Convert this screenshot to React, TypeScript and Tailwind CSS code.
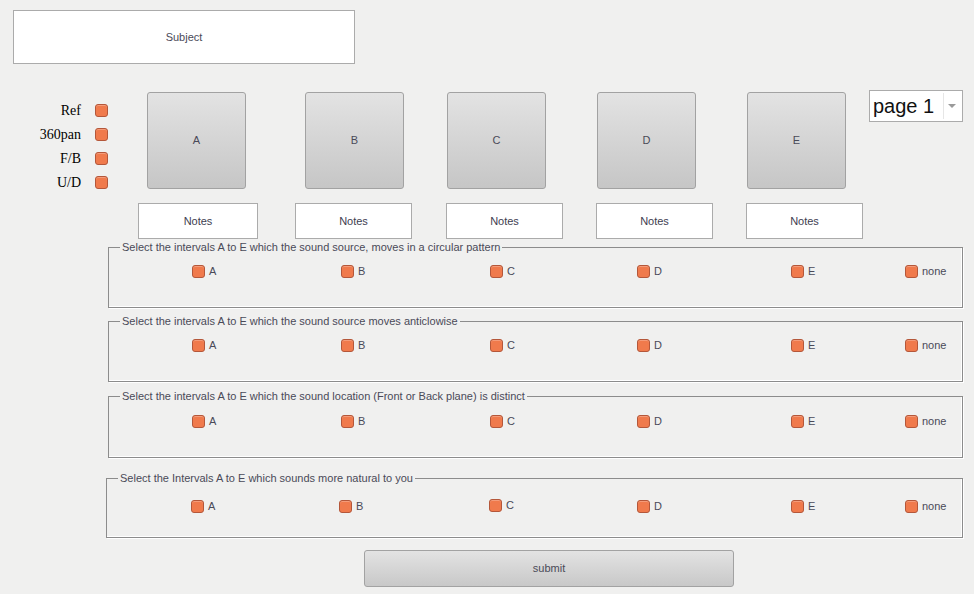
const OPTS = ["A", "B", "C", "D", "E", "none"];

const Check = () => (
  <span className="inline-block h-[13px] w-[13px] shrink-0 rounded-[3px] border border-[#b4573a] bg-[#f07a4c] shadow-[inset_0_1px_0_rgba(255,255,255,0.25)]" />
);

const Choice = ({ label, w, dy = 0 }: { label: string; w?: number; dy?: number }) => (
  <div className="flex shrink-0 items-center gap-[4px]" style={{ width: w, marginTop: dy }}>
    <Check />
    <span className="text-[11px] leading-[13px] text-[#4a4a58]">{label}</span>
  </div>
);

interface Group {
  title: string;
  mt: string;
  h: string;
  pt: string;
  left: string;
  titleLeft: string;
  lead: number;
  widths: number[];
  dys?: number[];
}

const groups: Group[] = [
  {
    title: "Select the intervals A to E which the sound source, moves in a circular pattern",
    mt: "mt-[8px]",
    h: "h-[61px]",
    pt: "pt-[17px]",
    left: "ml-[108px] w-[855px]",
    titleLeft: "left-[11px]",
    lead: 83,
    widths: [149, 149, 147, 154, 114, 50],
  },
  {
    title: "Select the intervals A to E which the sound source moves anticlowise",
    mt: "mt-[13px]",
    h: "h-[61px]",
    pt: "pt-[17px]",
    left: "ml-[108px] w-[855px]",
    titleLeft: "left-[11px]",
    lead: 83,
    widths: [149, 149, 147, 154, 114, 50],
    dys: [0, -1, 0, 0, 0, 0],
  },
  {
    title: "Select the intervals A to E which the sound location (Front or Back plane) is distinct",
    mt: "mt-[14px]",
    h: "h-[62px]",
    pt: "pt-[18px]",
    left: "ml-[108px] w-[855px]",
    titleLeft: "left-[11px]",
    lead: 83,
    widths: [149, 149, 147, 154, 114, 50],
  },
  {
    title: "Select the Intervals A to E which sounds more natural to you",
    mt: "mt-[20px]",
    h: "h-[60px]",
    pt: "pt-[21px]",
    left: "ml-[106px] w-[857px]",
    titleLeft: "left-[11px]",
    lead: 84,
    widths: [148, 150, 148, 154, 114, 50],
    dys: [0, 0, -2, 0, 0, 0],
  },
];

const bigBtn =
  "flex h-[97px] w-[99px] shrink-0 items-center justify-center rounded-[3px] border border-[#a2a2a2] bg-gradient-to-b from-[#e3e3e3] to-[#c6c6c6] text-[11px] text-[#4a4a58]";

const noteBox =
  "flex h-[36px] items-center justify-center border border-[#ababab] bg-white text-[11px] text-[#404050]";

export default function App() {
  return (
    <div className="h-[594px] w-[974px] overflow-hidden bg-[#f0f0ef] font-['Liberation_Sans',Arial,sans-serif]">
      <div className="flex h-[54px] w-[342px] ml-[13px] pt-[10px] box-content">
        <div className="flex h-[54px] w-[342px] items-center justify-center border border-[#ababab] bg-white text-[11px] text-[#4a4a58]">
          Subject
        </div>
      </div>

      <div className="mt-[28px] flex h-[111px]">
        <div className="mt-[6px] flex w-[81px] flex-col items-end font-['Liberation_Serif','Times_New_Roman',serif] text-[14px] text-black">
          {["Ref", "360pan", "F/B", "U/D"].map((t) => (
            <div key={t} className="flex h-[24px] items-center">{t}</div>
          ))}
        </div>
        <div className="ml-[14px] mt-[6px] flex flex-col">
          {[0, 1, 2, 3].map((i) => (
            <div key={i} className="flex h-[24px] items-center">
              <Check />
            </div>
          ))}
        </div>
        <div className={`${bigBtn} ml-[39px]`}>A</div>
        <div className={`${bigBtn} ml-[59px]`}>B</div>
        <div className={`${bigBtn} ml-[43px]`}>C</div>
        <div className={`${bigBtn} ml-[51px]`}>D</div>
        <div className={`${bigBtn} ml-[51px]`}>E</div>
        <div className="relative -mt-[2px] ml-[23px] flex h-[32px] w-[94px] items-center border border-[#ababab] bg-white">
          <span className="pl-[3px] text-[20px] leading-none text-[#111]">page 1</span>
          <span className="absolute right-[3px] top-[2px] bottom-[2px] flex w-[16px] items-center justify-center border-l border-[#e6e6e6]">
            <span className="h-0 w-0 border-x-[4px] border-t-[4px] border-x-transparent border-t-[#9a9a9a]" />
          </span>
        </div>
      </div>

      <div className="flex">
        <div className={`${noteBox} ml-[138px] w-[120px]`}>Notes</div>
        <div className={`${noteBox} ml-[37px] w-[117px]`}>Notes</div>
        <div className={`${noteBox} ml-[34px] w-[117px]`}>Notes</div>
        <div className={`${noteBox} ml-[33px] w-[117px]`}>Notes</div>
        <div className={`${noteBox} ml-[33px] w-[117px]`}>Notes</div>
      </div>

      {groups.map((g, gi) => (
        <div
          key={gi}
          className={`relative ${g.mt} ${g.h} ${g.left} ${g.pt} border border-[#8c8c8c] shadow-[inset_-1px_-1px_0_#ffffff,1px_1px_0_#ffffff]`}
        >
          <span
            className={`absolute -top-[7px] ${g.titleLeft} bg-[#f0f0ef] px-[2px] text-[11px] leading-[13px] text-[#4a4a58] whitespace-nowrap`}
          >
            {g.title}
          </span>
          <div className="flex">
            <div className="shrink-0" style={{ width: g.lead }} />
            {OPTS.map((o, i) => (
              <Choice key={o} label={o} w={g.widths[i]} dy={g.dys ? g.dys[i] : 0} />
            ))}
          </div>
        </div>
      ))}

      <div className="ml-[364px] mt-[12px] flex h-[37px] w-[370px] items-center justify-center rounded-[3px] border border-[#a2a2a2] bg-gradient-to-b from-[#e3e3e3] to-[#c8c8c8] text-[11px] text-[#4a4a58]">
        submit
      </div>
    </div>
  );
}
